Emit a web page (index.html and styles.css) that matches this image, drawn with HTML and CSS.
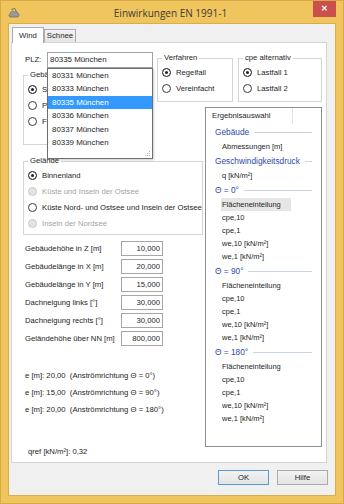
FILE: index.html
```html
<!DOCTYPE html>
<html lang="de">
<head>
    <meta charset="UTF-8">
    <meta name="viewport" content="width=device-width, initial-scale=1.0">
    <title>Einwirkungen EN 1991-1</title>
    <link rel="stylesheet" href="styles.css">
</head>
<body>
<div class="window">
    <div class="titlebar">
        <svg class="app-icon" width="12" height="12" viewBox="0 0 12 12">
            <path d="M2.5 10 C0.6 10 0.4 7.2 2.2 6.9 C2.2 4.4 5 3.2 6.6 5 C7.4 3.8 9.6 4.3 9.6 6.2 C11.6 6.4 11.4 10 9.4 10 Z" fill="#9a9a9a" stroke="#6d6d6d" stroke-width="0.8"/>
            <path d="M3 2.5 L7 1.5 L8 4" fill="none" stroke="#7a7a7a" stroke-width="1"/>
        </svg>
        <div class="title">Einwirkungen EN 1991-1</div>
        <div class="close">&#x2715;</div>
    </div>

    <div class="client">
        <div class="tabs">
            <div class="tab active">Wind</div>
            <div class="tab">Schnee</div>
        </div>

        <div class="tabpage">
            <!-- PLZ with open suggestion list (it lies over the Gebäude group) -->
            <div class="plz">
                <span class="plz-label">PLZ:</span>
                <div class="combo">
                    <div class="combo-text">80335 München</div>
                    <ul class="dropdown">
                        <li>80331 München</li>
                        <li>80333 München</li>
                        <li class="selected">80335 München</li>
                        <li>80336 München</li>
                        <li>80337 München</li>
                        <li>80339 München</li>
                        <svg class="grip" width="6" height="6" viewBox="0 0 6 6">
                            <rect x="4" y="0" width="1" height="1" fill="#b0b0b0"/>
                            <rect x="2" y="2" width="1" height="1" fill="#b0b0b0"/>
                            <rect x="4" y="2" width="1" height="1" fill="#b0b0b0"/>
                            <rect x="0" y="4" width="1" height="1" fill="#b0b0b0"/>
                            <rect x="2" y="4" width="1" height="1" fill="#b0b0b0"/>
                            <rect x="4" y="4" width="1" height="1" fill="#b0b0b0"/>
                        </svg>
                    </ul>
                </div>
            </div>

            <div class="groups">
                <fieldset class="group verfahren">
                    <legend>Verfahren</legend>
                    <div class="radio"><span class="dot checked"></span>Regelfall</div>
                    <div class="radio"><span class="dot"></span>Vereinfacht</div>
                </fieldset>
                <fieldset class="group cpe">
                    <legend>cpe alternativ</legend>
                    <div class="radio"><span class="dot checked"></span>Lastfall 1</div>
                    <div class="radio"><span class="dot"></span>Lastfall 2</div>
                </fieldset>
            </div>

            <fieldset class="group gebaeude">
                <legend>Gebäude</legend>
                <div class="radio"><span class="dot checked"></span>Satteldach</div>
                <div class="radio"><span class="dot"></span>Pultdach</div>
                <div class="radio"><span class="dot"></span>Flachdach</div>
            </fieldset>

            <!-- Ergebnisauswahl list -->
            <div class="results">
                <div class="res-head"><span>Ergebnisauswahl</span></div>

                <div class="res-title">Gebäude</div>
                <div class="res-item">Abmessungen [m]</div>

                <div class="res-title">Geschwindigkeitsdruck</div>
                <div class="res-item">q [kN/m²]</div>

                <div class="res-title">Θ = 0°</div>
                <div class="res-item selected">Flächeneinteilung</div>
                <div class="res-item">cpe,10</div>
                <div class="res-item">cpe,1</div>
                <div class="res-item">we,10 [kN/m²]</div>
                <div class="res-item">we,1 [kN/m²]</div>

                <div class="res-title">Θ = 90°</div>
                <div class="res-item">Flächeneinteilung</div>
                <div class="res-item">cpe,10</div>
                <div class="res-item">cpe,1</div>
                <div class="res-item">we,10 [kN/m²]</div>
                <div class="res-item">we,1 [kN/m²]</div>

                <div class="res-title">Θ = 180°</div>
                <div class="res-item">Flächeneinteilung</div>
                <div class="res-item">cpe,10</div>
                <div class="res-item">cpe,1</div>
                <div class="res-item">we,10 [kN/m²]</div>
                <div class="res-item">we,1 [kN/m²]</div>
            </div>

            <div class="inputs">
                <fieldset class="group gelaende">
                    <legend>Gelände</legend>
                    <div class="radio"><span class="dot checked"></span>Binnenland</div>
                    <div class="radio disabled"><span class="dot"></span>Küste und Inseln der Ostsee</div>
                    <div class="radio"><span class="dot"></span>Küste Nord- und Ostsee und Inseln der Ostsee</div>
                    <div class="radio disabled"><span class="dot"></span>Inseln der Nordsee</div>
                </fieldset>

                <div class="fields">
                    <div class="field"><span class="field-label">Gebäudehöhe in Z [m]</span><div class="num">10,000</div></div>
                    <div class="field"><span class="field-label">Gebäudelänge in X [m]</span><div class="num">20,000</div></div>
                    <div class="field"><span class="field-label">Gebäudelänge in Y [m]</span><div class="num">15,000</div></div>
                    <div class="field"><span class="field-label">Dachneigung links [°]</span><div class="num">30,000</div></div>
                    <div class="field"><span class="field-label">Dachneigung rechts [°]</span><div class="num">30,000</div></div>
                    <div class="field"><span class="field-label">Geländehöhe über NN [m]</span><div class="num">800,000</div></div>
                </div>

                <div class="e-values">
                    <p>e [m]: 20,00  (Anströmrichtung Θ = 0°)</p>
                    <p>e [m]: 15,00  (Anströmrichtung Θ = 90°)</p>
                    <p>e [m]: 20,00  (Anströmrichtung Θ = 180°)</p>
                </div>

                <p class="qref">qref [kN/m²]: 0,32</p>
            </div>
        </div>

        <div class="buttons">
            <div class="btn default">OK</div>
            <div class="btn">Hilfe</div>
        </div>
    </div>
</div>
</body>
</html>
```

FILE: styles.css
```css
* {
    box-sizing: border-box;
}

body {
    margin: 0;
    font-family: "Liberation Sans", Arial, sans-serif;
    font-size: 7.7px;
    color: #1e1e1e;
    background: #ffffff;
}

/* Window frame */
.window {
    width: 344px;
    height: 504px;
    background: #f1c55e;
    border: 1px solid #d9ab45;
    padding: 0 7px 7px 7px;
    display: flex;
    flex-direction: column;
}

.titlebar {
    height: 22px;
    display: flex;
    align-items: center;
}

.app-icon {
    flex: none;
    margin-top: 2px;
}

.title {
    flex: 1;
    text-align: center;
    padding-left: 8px;
    padding-top: 1px;
    font-family: "Open Sans", "Noto Sans", sans-serif;
    font-size: 10px;
    color: #3a3a3a;
}

.close {
    align-self: flex-start;
    width: 23px;
    height: 16px;
    background: #c9504c;
    color: #ffffff;
    font-size: 8px;
    font-weight: bold;
    text-align: center;
    line-height: 16px;
}

.client {
    flex: 1;
    background: #f0f0f0;
    border: 1px solid #d8ae4d;
    display: flex;
    flex-direction: column;
}

/* Tabs */
.tabs {
    height: 18px;
    padding-left: 3px;
    display: flex;
    align-items: flex-end;
}

.tab {
    width: 32px;
    height: 13px;
    border: 1px solid #acacac;
    border-bottom: none;
    background: linear-gradient(#f3f3f3, #e6e6e6);
    text-align: center;
    line-height: 12px;
    font-size: 7.8px;
}

.tab.active {
    height: 16px;
    line-height: 15px;
    background: #ffffff;
    position: relative;
    z-index: 2;
    margin-bottom: -1px;
}

.tabpage {
    margin-left: 2px;
    width: 316px;
    height: 421px;
    background: #ffffff;
    border: 1px solid #d4d4d4;
    padding-top: 9px;
    display: grid;
    grid-template-columns: 145px 48px 121px;
    grid-template-rows: 18px 37px 49px 1fr;
    grid-template-areas:
        "plz  grp  grp"
        "geb  grp  grp"
        "geb  .    res"
        "left left res";
}

/* PLZ combo */
.plz {
    grid-area: plz;
    display: flex;
    align-items: flex-start;
    padding-left: 13px;
}

.plz-label {
    width: 22px;
    line-height: 16px;
}

.combo {
    position: relative;
    width: 106px;
    height: 16px;
    border: 1px solid #9da3ad;
    background: #ffffff;
    z-index: 5;
}

.combo-text {
    padding-left: 2px;
    line-height: 14px;
    font-size: 7.9px;
}

.dropdown {
    position: absolute;
    top: 15px;
    left: -1px;
    width: 106px;
    height: 91px;
    margin: 0;
    padding: 0;
    list-style: none;
    background: #ffffff;
    border: 1px solid #6e6e6e;
    box-shadow: 1px 1px 2px rgba(0, 0, 0, 0.2);
}

.dropdown li {
    height: 13.4px;
    line-height: 13.4px;
    padding-left: 4px;
    font-size: 7.9px;
}

.dropdown li.selected {
    background: #3399ff;
    color: #ffffff;
}

.grip {
    position: absolute;
    right: 1px;
    bottom: 1px;
}

/* Group boxes */
.group {
    margin: 0;
    padding: 1px 4px 0 4px;
    border: 1px solid #d5d5d5;
    min-width: 0;
}

.group legend {
    padding: 0 2px;
    line-height: 10px;
}

.radio {
    height: 16px;
    display: flex;
    align-items: center;
    gap: 5px;
    white-space: nowrap;
}

.dot {
    flex: none;
    width: 9px;
    height: 9px;
    border-radius: 50%;
    border: 1px solid #3c3c3c;
    background: #ffffff;
}

.dot.checked {
    background: #1e1e1e;
    box-shadow: inset 0 0 0 2px #ffffff;
}

.radio.disabled {
    color: #a3a3a3;
}

.radio.disabled .dot {
    border-color: #c9c9c9;
    background: #e4e4e4;
}

.groups {
    grid-area: grp;
    display: flex;
    gap: 5px;
    padding-top: 1px;
}

.verfahren {
    width: 76px;
    height: 49px;
}

.cpe {
    width: 84px;
    height: 49px;
}

.gebaeude {
    grid-area: geb;
    margin-left: 11px;
    width: 130px;
    height: 75px;
}

/* Ergebnisauswahl */
.results {
    grid-area: res;
    width: 117px;
    height: 340px;
    border: 1px solid #8a9099;
    background: #ffffff;
}

.res-head {
    height: 16px;
    display: flex;
}

.res-head span {
    width: 87px;
    padding-left: 6px;
    line-height: 16px;
    border-right: 1px solid #e3e3e3;
}

.res-title {
    height: 16px;
    display: flex;
    align-items: center;
    padding: 0 9px;
    color: #2b4ca8;
    font-size: 8.3px;
}

.res-title::after {
    content: "";
    flex: 1;
    height: 1px;
    margin-left: 5px;
    background: #cbd3e6;
}

.res-item {
    width: 70px;
    height: 13px;
    line-height: 13px;
    margin-left: 15px;
    padding-left: 1px;
    font-size: 7.5px;
}

.res-item.selected {
    background: #e6e6e6;
}

/* Left column below the combo */
.inputs {
    grid-area: left;
}

.gelaende {
    margin-left: 11px;
    width: 180px;
    height: 79px;
}

.fields {
    margin-top: 4px;
    padding-left: 13px;
}

.field {
    height: 18px;
    display: flex;
    align-items: center;
}

.field-label {
    width: 96px;
}

.num {
    width: 42px;
    height: 15px;
    border: 1px solid #a6a6a6;
    text-align: right;
    padding-right: 2px;
    line-height: 13px;
}

.e-values {
    margin-top: 20px;
    padding-left: 13px;
}

.e-values p {
    margin: 0;
    line-height: 17px;
    white-space: pre;
}

.qref {
    margin: 25px 0 0 16px;
    line-height: 17px;
}

/* Dialog buttons */
.buttons {
    margin-top: 7px;
    padding-right: 7px;
    display: flex;
    justify-content: flex-end;
    gap: 8px;
}

.btn {
    width: 51px;
    height: 15px;
    border: 1px solid #acacac;
    background: linear-gradient(#f2f2f2, #e4e4e4);
    text-align: center;
    line-height: 13px;
}

.btn.default {
    border-color: #5b9bd5;
}
```
